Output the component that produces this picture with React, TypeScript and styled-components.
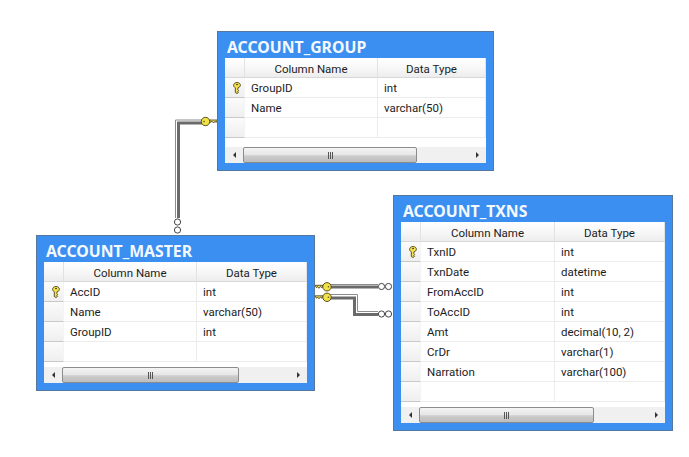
import styled, { createGlobalStyle } from "styled-components";

interface TableData {
  name: string;
  left: number;
  top: number;
  nameWidth: number;
  typeWidth: number;
  thumbWidth: number;
  scrollGap: number;
  columns: [string, string][];
}

const tables: TableData[] = [
  {
    name: "ACCOUNT_GROUP",
    left: 217,
    top: 31,
    nameWidth: 133,
    typeWidth: 108,
    thumbWidth: 174,
    scrollGap: 9,
    columns: [
      ["GroupID", "int"],
      ["Name", "varchar(50)"],
    ],
  },
  {
    name: "ACCOUNT_MASTER",
    left: 36,
    top: 235,
    nameWidth: 133,
    typeWidth: 110,
    thumbWidth: 177,
    scrollGap: 5,
    columns: [
      ["AccID", "int"],
      ["Name", "varchar(50)"],
      ["GroupID", "int"],
    ],
  },
  {
    name: "ACCOUNT_TXNS",
    left: 393,
    top: 195,
    nameWidth: 134,
    typeWidth: 110,
    thumbWidth: 175,
    scrollGap: 5,
    columns: [
      ["TxnID", "int"],
      ["TxnDate", "datetime"],
      ["FromAccID", "int"],
      ["ToAccID", "int"],
      ["Amt", "decimal(10, 2)"],
      ["CrDr", "varchar(1)"],
      ["Narration", "varchar(100)"],
    ],
  },
];

const RowKey = () => (
  <svg width="8" height="12" viewBox="0 0 8 12">
    <path
      d="M4 .5C2 .5.6 1.7.6 3.3c0 1.1.7 2 1.7 2.5v4.7l1.7 1 1.6-1.2-.8-.9.8-.8-.8-.8.2-2C6.500 5.300 7.400 4.400 7.400 3.300 7.400 1.700 6 .5 4 .5Z"
      fill="#f2e04c"
      stroke="#4a4320"
      strokeWidth=".9"
    />
    <rect x="3" y="2" width="2" height="1.100" fill="#5b5220" />
  </svg>
);

const LinkKey = ({ x, y, flip }: { x: number; y: number; flip?: boolean }) => (
  <g transform={`translate(${x} ${y}) scale(${flip ? -1 : 1} 1)`}>
    <path
      d="M4 -1.500H12L10.500 1 9.500 -.3 8 1.500 6.500 -.3 5 1Z"
      fill="#efe05a"
      stroke="#3f3a18"
      strokeWidth=".8"
    />
    <circle r="4.200" fill="#f1e347" stroke="#57501c" strokeWidth="1" />
    <circle cx="-1.400" r=".8" fill="#57501c" />
  </g>
);

const Ring = ({ x, y }: { x: number; y: number }) => (
  <circle cx={x} cy={y} r="3.100" fill="#fff" stroke="#444" strokeWidth="1" />
);

// each link is a thick band with a thin line running beside it
const Link = ({ band, edge }: { band: string; edge: string }) => (
  <>
    <polyline points={edge} fill="none" stroke="#8c8c8c" strokeWidth="1" />
    <polyline points={band} fill="none" stroke="#6a6a6a" strokeWidth="3" />
  </>
);

const Connectors = () => (
  <LinkLayer width="689" height="457" viewBox="0 0 689 457">
    <Link
      band="205,123 178.500,123 178.500,218"
      edge="205,120 175.500,120 175.500,218"
    />
    <Ring x={177.500} y={222} />
    <Ring x={177.500} y={230} />
    <LinkKey x={205.500} y={121.500} />

    <Link band="327,287 378,287" edge="327,284.500 378,284.500" />
    <Ring x={381.500} y={286.500} />
    <Ring x={388.500} y={286.500} />
    <LinkKey x={327} y={286.800} flip />

    <Link
      band="327,298 354.500,298 354.500,314.500 378,314.500"
      edge="327,294.500 357.500,294.500 357.500,311.500 378,311.500"
    />
    <Ring x={381.500} y={314} />
    <Ring x={388.500} y={314} />
    <LinkKey x={327} y={297.300} flip />
  </LinkLayer>
);

const TableNode = ({ table }: { table: TableData }) => {
  const { name, left, top, nameWidth, typeWidth, thumbWidth, scrollGap, columns } = table;

  return (
    <Node $left={left} $top={top}>
      <Title>{name}</Title>
      <Sheet $nameWidth={nameWidth} $typeWidth={typeWidth}>
        <HeadRow>
          <HeadCell />
          <HeadCell>Column Name</HeadCell>
          <HeadCell>Data Type</HeadCell>
        </HeadRow>
        {columns.map(([column, type], index) => (
          <Row key={column}>
            <Selector>{index === 0 && <RowKey />}</Selector>
            <Cell>{column}</Cell>
            <Cell>{type}</Cell>
          </Row>
        ))}
        <Row>
          <Selector />
          <Cell />
          <Cell />
        </Row>
        <ScrollGap $height={scrollGap} />
        <ScrollBar>
          <ArrowButton>
            <ArrowLeft />
          </ArrowButton>
          <Thumb $width={thumbWidth}>
            <Grip>
              <i />
              <i />
              <i />
            </Grip>
          </Thumb>
          <Track />
          <ArrowButton>
            <ArrowRight />
          </ArrowButton>
        </ScrollBar>
      </Sheet>
    </Node>
  );
};

const App = () => (
  <>
    <GlobalStyle />
    <Canvas>
      <Connectors />
      {tables.map((table) => (
        <TableNode key={table.name} table={table} />
      ))}
    </Canvas>
  </>
);

export default App;

const GlobalStyle = createGlobalStyle`
  html, body {
    margin: 0;
    background: #fff;
  }
`;

const Canvas = styled.div`
  position: relative;
  width: 689px;
  height: 457px;
  overflow: hidden;
  background: #fff;
  font-family: Roboto, "Noto Sans", sans-serif;
`;

const LinkLayer = styled.svg`
  position: absolute;
  inset: 0;
`;

const Node = styled.div<{ $left: number; $top: number }>`
  position: absolute;
  left: ${(p) => p.$left}px;
  top: ${(p) => p.$top}px;
  border: 1px solid #56789c;
  background: #3b8ff0;
  padding: 0 7px 7px 7px;
`;

const Title = styled.div`
  height: 26px;
  line-height: 31px;
  padding-left: 2px;
  color: #f4f9ff;
  font-family: "Noto Sans", sans-serif;
  font-size: 15.8px;
  font-weight: 700;
  white-space: nowrap;
  overflow: hidden;
`;

const Sheet = styled.div<{ $nameWidth: number; $typeWidth: number }>`
  display: grid;
  grid-template-columns: 20px ${(p) => p.$nameWidth}px ${(p) => p.$typeWidth}px;
  background: #fff;
  font-size: 11.5px;
  color: #1c1c1c;
`;

const HeadRow = styled.div`
  display: grid;
  grid-column: 1 / -1;
  grid-template-columns: subgrid;
  height: 20px;
`;

const HeadCell = styled.div`
  display: flex;
  align-items: center;
  justify-content: center;
  padding-top: 2px;
  background: linear-gradient(#fff, #f6f6f6 60%, #ededed);
  border-bottom: 1px solid #d8d8d8;
  border-right: 1px solid #e2e2e2;
  box-sizing: border-box;
`;

const Row = styled.div`
  display: grid;
  grid-column: 1 / -1;
  grid-template-columns: subgrid;
  height: 20px;
`;

const Selector = styled.div`
  display: flex;
  align-items: center;
  justify-content: flex-end;
  padding-right: 3px;
  box-sizing: border-box;
  background: linear-gradient(#fbfbfb, #efefef);
  border-bottom: 1px solid #c9c9c9;
  border-right: 1px solid #f4f4f4;
`;

const Cell = styled.div`
  display: flex;
  align-items: center;
  padding-left: 6px;
  box-sizing: border-box;
  border-bottom: 1px solid #ececec;
  border-right: 1px solid #ececec;
  white-space: nowrap;
`;

const ScrollGap = styled.div<{ $height: number }>`
  grid-column: 1 / -1;
  height: ${(p) => p.$height}px;
`;

const ScrollBar = styled.div`
  display: flex;
  grid-column: 1 / -1;
  align-items: stretch;
  height: 16px;
  background: #f0f0f0;
`;

const ArrowButton = styled.div`
  display: flex;
  align-items: center;
  justify-content: center;
  flex: none;
  width: 18px;
`;

const ArrowLeft = styled.div`
  border-top: 3px solid transparent;
  border-bottom: 3px solid transparent;
  border-right: 3px solid #333;
`;

const ArrowRight = styled.div`
  border-top: 3px solid transparent;
  border-bottom: 3px solid transparent;
  border-left: 3px solid #333;
`;

const Thumb = styled.div<{ $width: number }>`
  display: flex;
  align-items: center;
  justify-content: center;
  flex: none;
  box-sizing: border-box;
  width: ${(p) => p.$width}px;
  border: 1px solid #8c8c8c;
  border-radius: 2px;
  background: linear-gradient(#f4f4f4, #e6e6e6 50%, #cdcdcd 55%, #bdbdbd);
`;

const Grip = styled.div`
  display: flex;
  gap: 1px;

  i {
    display: block;
    width: 1px;
    height: 7px;
    background: #555;
  }
`;

const Track = styled.div`
  flex: 1;
`;
